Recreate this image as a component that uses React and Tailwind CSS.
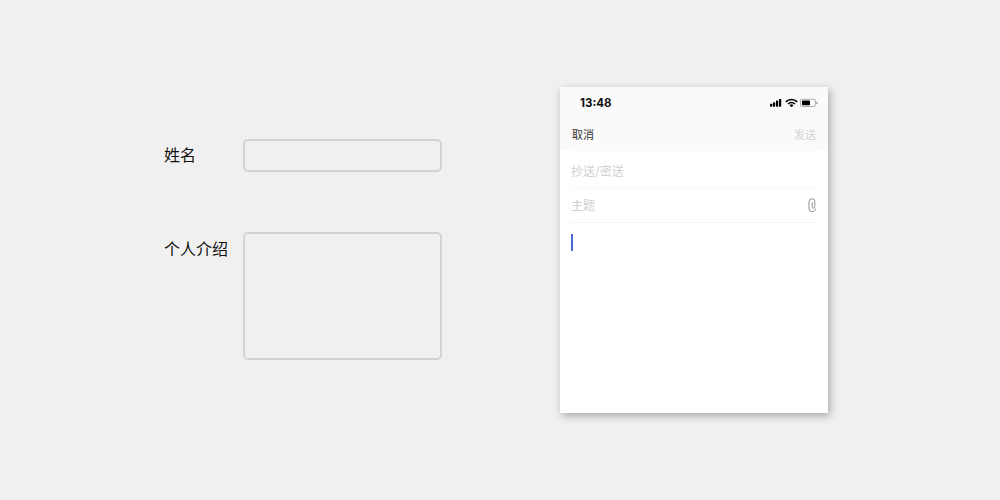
import React from 'react';

const cjk = { fontFamily: '"Noto Sans CJK SC", sans-serif' };

const StatusIcons = () => (
    <svg width="48" height="10" viewBox="0 0 48 10" className="block">
        <rect x="0" y="5.8" width="2.2" height="2.9" rx="0.4" fill="#000" />
        <rect x="3" y="4.3" width="2.2" height="4.4" rx="0.4" fill="#000" />
        <rect x="6" y="2.6" width="2.2" height="6.1" rx="0.4" fill="#000" />
        <rect x="9" y="0.9" width="2.2" height="7.8" rx="0.4" fill="#000" />
        <path d="M15.8 3.9a8 8 0 0 1 11.4 0" fill="none" stroke="#000" strokeWidth="1.6" />
        <path d="M18 6a4.9 4.9 0 0 1 7 0" fill="none" stroke="#000" strokeWidth="1.6" />
        <path d="M21.5 9.2 L19.5 7.2 a2.8 2.8 0 0 1 4 0 Z" fill="#000" />
        <rect x="30.5" y="1.2" width="15" height="7.3" rx="1.8" fill="none" stroke="#999" strokeWidth="0.8" />
        <rect x="32" y="2.5" width="8" height="4.7" rx="0.7" fill="#000" />
        <rect x="46.2" y="3.8" width="1.2" height="2.3" rx="0.5" fill="#999" />
    </svg>
);

const Paperclip = () => (
    <svg width="9" height="14" viewBox="0 0 9 14" fill="none" stroke="#8f8f8f" strokeWidth="1" strokeLinecap="round">
        <path d="M4.2 4.5V8.8a1.3 1.3 0 0 0 2.6 0V3.6a2.9 2.9 0 0 0-5.8 0V10a3.1 3.1 0 0 0 6.4 1" />
    </svg>
);

const App = () => {
    return (
        <div className="w-[1000px] h-[500px] bg-[#f0f0f0] flex overflow-hidden" style={cjk}>
            <div className="w-[560px] pl-[164px] pt-[139px] flex flex-col gap-[60px]">
                <div className="flex">
                    <label className="w-[79px] text-[16px] leading-[31px] text-[#111]">姓名</label>
                    <div className="w-[199px] h-[33px] rounded-[5px] border-2 border-[#d3d3d3]"></div>
                </div>
                <div className="flex">
                    <label className="w-[79px] text-[16px] leading-[33px] text-[#111]">个人介绍</label>
                    <div className="w-[199px] h-[128px] rounded-[5px] border-2 border-[#d3d3d3]"></div>
                </div>
            </div>

            <div className="mt-[87px] w-[268px] h-[326px] bg-white flex flex-col shadow-[2px_3px_8px_rgba(0,0,0,0.3)]">
                <div className="h-[63px] bg-[#fafafa] flex flex-col">
                    <div className="h-[31px] pl-[20px] pr-[10px] flex items-center justify-between">
                        <span className="pt-[2px] text-[11.5px] font-bold text-[#111]" style={{ fontFamily: '"Inter", sans-serif' }}>13:48</span>
                        <StatusIcons />
                    </div>
                    <div className="h-[32px] px-[12px] flex items-center justify-between text-[11px] leading-[16px]">
                        <span className="text-[#333]">取消</span>
                        <span className="text-[#d2d2d2]">发送</span>
                    </div>
                </div>
                <div className="px-[11px] flex flex-col">
                    <div className="h-[37px] pt-[3px] border-t border-b border-t-[#f8f8f8] border-b-[#f6f6f6] mt-[1px] flex items-center text-[12px] text-[#cfcfcf]">抄送/密送</div>
                    <div className="h-[35px] border-b border-[#f6f6f6] flex items-center justify-between text-[12px] text-[#cfcfcf]">
                        <span>主题</span>
                        <Paperclip />
                    </div>
                    <div className="mt-[11px] w-[2px] h-[17px] bg-[#4a68d8]"></div>
                </div>
            </div>
        </div>
    );
};

export default App;
